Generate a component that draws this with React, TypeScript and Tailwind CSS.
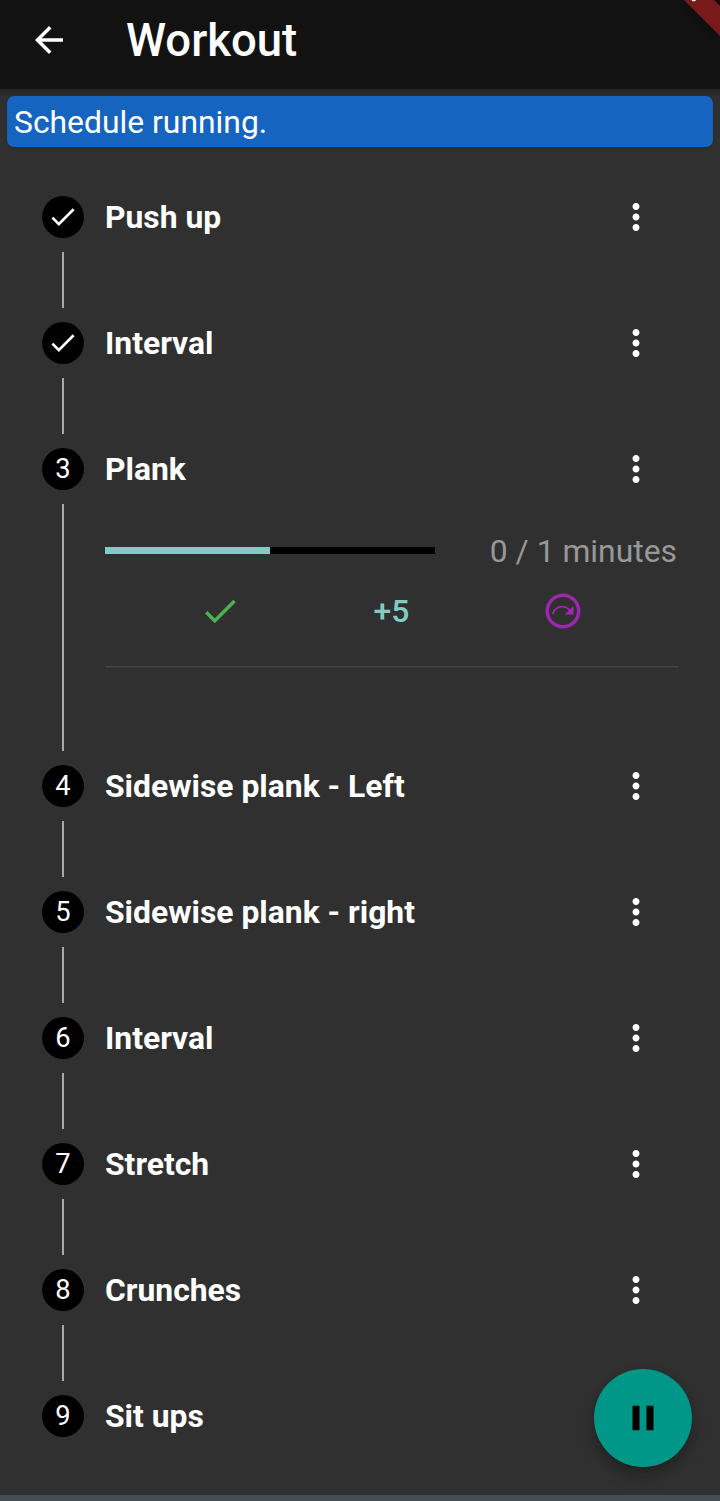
import { MdArrowBack, MdCheck, MdMoreVert, MdOutlineNextPlan, MdPause } from "react-icons/md";

type Step = { title: string; state: "done" | "active" | "pending" };

const steps: Step[] = [
  { title: "Push up", state: "done" },
  { title: "Interval", state: "done" },
  { title: "Plank", state: "active" },
  { title: "Sidewise plank - Left", state: "pending" },
  { title: "Sidewise plank - right", state: "pending" },
  { title: "Interval", state: "pending" },
  { title: "Stretch", state: "pending" },
  { title: "Crunches", state: "pending" },
  { title: "Sit ups", state: "pending" },
];

function AppBar() {
  return (
    <header className="relative z-10 flex h-[89px] shrink-0 items-start overflow-hidden bg-[#121212]">
      <button aria-label="Back" className="ml-7 mt-[19px]">
        <MdArrowBack size={42} />
      </button>
      <h1 className="ml-14 mt-[14px] text-[45.5px] leading-[54px] font-medium whitespace-nowrap">Workout</h1>
      <svg className="absolute top-0 right-0 h-[60px] w-[60px]" viewBox="0 0 60 60">
        <defs>
          <filter id="soft" x="-50%" y="-50%" width="200%" height="200%">
            <feGaussianBlur stdDeviation="4" />
          </filter>
        </defs>
        <path d="M24 0L60 36V6L54 0z" fill="#000" opacity="0.45" filter="url(#soft)" />
        <path d="M24 0L60 36V6L54 0z" fill="#7a1919" />
        <path d="M31.5 0h4.5l-1 1.2h-2.5z" fill="#fff" />
      </svg>
    </header>
  );
}

function ActiveContent() {
  return (
    <div className="flex h-[191px] pl-[62px]">
      <div className="w-[2px] shrink-0 -mt-[56px] h-[247px] bg-[#a8a8a8]" />
      <div className="ml-[41px] w-[573px]">
        <div className="flex h-[38px] items-start justify-between -mt-[28px]">
          <div className="mt-[15px] flex h-[7px] w-[330px] bg-black">
            <div className="w-1/2 bg-[#80cbc4]" />
          </div>
          <span className="mr-[1px] text-[31.85px] leading-[38px] text-[#989898] whitespace-nowrap">0 / 1 minutes</span>
        </div>
        <div className="mt-[9px] flex h-[63px] items-center justify-evenly">
          <button aria-label="Done" className="flex w-[111px] justify-center pr-[1px] text-[#4caf50]">
            <MdCheck size={42} />
          </button>
          <button className="w-[111px] text-center text-[31.85px] leading-[38px] font-medium text-[#80cbc4]">+5</button>
          <button aria-label="Skip" className="flex w-[111px] justify-center text-[#9c27b0]">
            <MdOutlineNextPlan size={42} />
          </button>
        </div>
        <div className="mt-[24px] h-[2px] border-b border-[#393939] bg-[#464646]" />
      </div>
    </div>
  );
}

function StepRow({ step, index, last }: { step: Step; index: number; last: boolean }) {
  return (
    <li>
      <div className="flex h-[42px] items-center pl-[42px] pr-[63px]">
        <div className="flex size-[42px] shrink-0 items-center justify-center rounded-full bg-black">
          {step.state === "done" ? (
            <MdCheck size={31.5} />
          ) : (
            <span className="text-[27.3px] leading-[42px]">{index + 1}</span>
          )}
        </div>
        <span className="ml-[21px] flex-1 text-[31.85px] leading-[42px] font-bold whitespace-nowrap">{step.title}</span>
        {!last && (
          <button aria-label="More">
            <MdMoreVert size={42} />
          </button>
        )}
      </div>
      {step.state !== "active" && !last && <div className="my-[14px] ml-[62px] h-[56px] w-[2px] bg-[#a8a8a8]" />}
      {step.state === "active" && (
        <div className="pt-[70px] pb-[14px]">
          <ActiveContent />
        </div>
      )}
    </li>
  );
}

export default function App() {
  return (
    <div className="relative flex h-[1501px] w-[720px] flex-col overflow-hidden bg-[#303030] font-[Roboto,sans-serif] text-white">
      <AppBar />
      <div className="h-[7px] shrink-0 bg-linear-to-b from-[#252525] to-[#2c2c2c]" />
      <div className="mx-[7px] flex h-[51px] shrink-0 items-center rounded-[7px] bg-[#1565c0] pt-[2px] pl-[7px] text-[31.85px] shadow-[0_1px_2px_rgba(0,0,0,0.25)]">
        Schedule running.
      </div>
      <ol className="mt-[49px] flex-1">
        {steps.map((step, i) => (
          <StepRow key={i} step={step} index={i} last={i === steps.length - 1} />
        ))}
      </ol>
      <div className="h-[6px] shrink-0 bg-[#444e52]" />
      <button
        aria-label="Pause"
        className="absolute right-7 bottom-[34px] flex size-[98px] items-center justify-center rounded-full bg-[#009688] text-black shadow-[0_9px_16px_rgba(0,0,0,0.22),0_3px_8px_rgba(0,0,0,0.14)]"
      >
        <MdPause size={42} />
      </button>
    </div>
  );
}
